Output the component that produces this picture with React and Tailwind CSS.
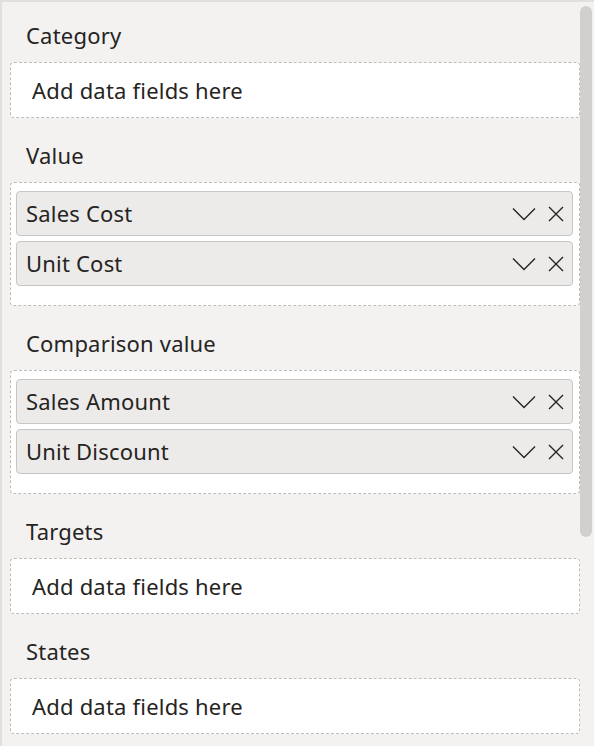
import React from 'react';

const FONT = { fontFamily: '"Segoe UI", "Noto Sans", "Open Sans", sans-serif' };

const sections = [
  { label: 'Category', fields: [] },
  { label: 'Value', fields: ['Sales Cost', 'Unit Cost'] },
  { label: 'Comparison value', fields: ['Sales Amount', 'Unit Discount'] },
  { label: 'Targets', fields: [] },
  { label: 'States', fields: [] },
];

const Chevron = () => (
  <svg width="24" height="14" viewBox="0 0 24 14" fill="none">
    <path d="M1 1.5 L12 12.5 L23 1.5" stroke="#252423" strokeWidth="1.4" />
  </svg>
);

const Close = () => (
  <svg width="16" height="16" viewBox="0 0 16 16" fill="none">
    <path d="M1 1 L15 15 M15 1 L1 15" stroke="#252423" strokeWidth="1.4" />
  </svg>
);

const FieldPill = ({ name }) => (
  <div className="flex items-center h-[45px] rounded-[4px] border border-[#c8c6c4] bg-[#edebe9] pl-[9px] pr-[8px]">
    <span className="flex-1 text-[22px] tracking-[0.2px] text-[#252423] leading-none pb-[1px]">{name}</span>
    <div className="flex items-center gap-[12px]">
      <Chevron />
      <Close />
    </div>
  </div>
);

const Well = ({ label, fields }) => (
  <div className="flex flex-col">
    <div className="h-[30px] flex items-center pl-[16px] pb-[4px] text-[22px] tracking-[0.2px] text-[#252423]">{label}</div>
    {fields.length === 0 ? (
      <div className="mt-[10px] h-[56px] flex items-center rounded-[4px] border border-dashed border-[#bebbb8] bg-white pl-[21px] text-[22px] tracking-[0.2px] text-[#252423]">
        Add data fields here
      </div>
    ) : (
      <div className="mt-[10px] h-[124px] flex flex-col gap-[5px] rounded-[4px] border border-dashed border-[#bebbb8] bg-white pt-[8px] pl-[5px] pr-[6px]">
        {fields.map((f) => (
          <FieldPill key={f} name={f} />
        ))}
      </div>
    )}
  </div>
);

export default function App() {
  return (
    <div
      className="w-[594px] h-[746px] flex bg-[#f3f2f1] border-t-2 border-l-2 border-[#e1dfdd] overflow-hidden"
      style={FONT}
    >
      <div className="flex-1 flex flex-col gap-[24px] pt-[20px] pl-[8px]">
        {sections.map((s) => (
          <Well key={s.label} label={s.label} fields={s.fields} />
        ))}
      </div>
      <div className="w-[14px] pt-[4px]">
        <div className="w-[12px] h-[531px] rounded-full bg-[#d2d0ce]" />
      </div>
    </div>
  );
}
